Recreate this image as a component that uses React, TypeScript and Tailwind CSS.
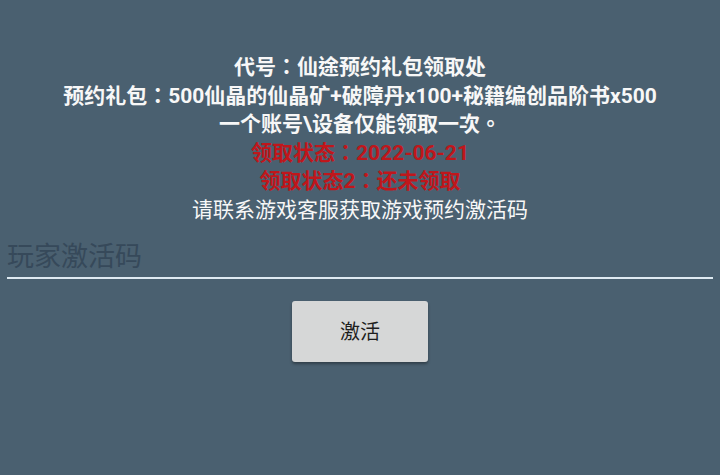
export default function App() {
  return (
    <div
      className="w-full h-[475px] bg-[#4a6070] flex flex-col items-stretch pt-[53px]"
      style={{ fontFamily: 'Roboto, "Noto Sans CJK TC", sans-serif' }}
    >
      <div className="flex flex-col items-center text-center leading-[28.5px] text-[21px]">
        <p className="font-bold text-[#f7f7f7]">代号：仙途预约礼包领取处</p>
        <p className="font-bold text-[#f7f7f7]">
          预约礼包：500仙晶的仙晶矿+破障丹x100+秘籍编创品阶书x500
        </p>
        <p className="font-bold text-[#f7f7f7]">一个账号\设备仅能领取一次。</p>
        <p className="font-bold text-[#c0161b]">领取状态：2022-06-21</p>
        <p className="font-bold text-[#c0161b]">领取状态2：还未领取</p>
        <p className="text-[#f7f7f7]">请联系游戏客服获取游戏预约激活码</p>
      </div>

      <div className="mx-[7px] mt-[13px]">
        <input
          type="text"
          placeholder="玩家激活码"
          className="w-full h-[42px] bg-transparent border-b-2 border-[#dfeaf2] outline-none px-0 text-[27px] text-[#f7f7f7] placeholder:text-[#36495a]"
        />
      </div>

      <div className="flex justify-center mt-[22px]">
        <button className="w-[136px] h-[61px] rounded-[3px] bg-[#d6d7d7] text-[20px] text-[#1e1e1e] shadow-[0_2px_3px_rgba(0,0,0,0.35)]">
          激活
        </button>
      </div>
    </div>
  );
}
